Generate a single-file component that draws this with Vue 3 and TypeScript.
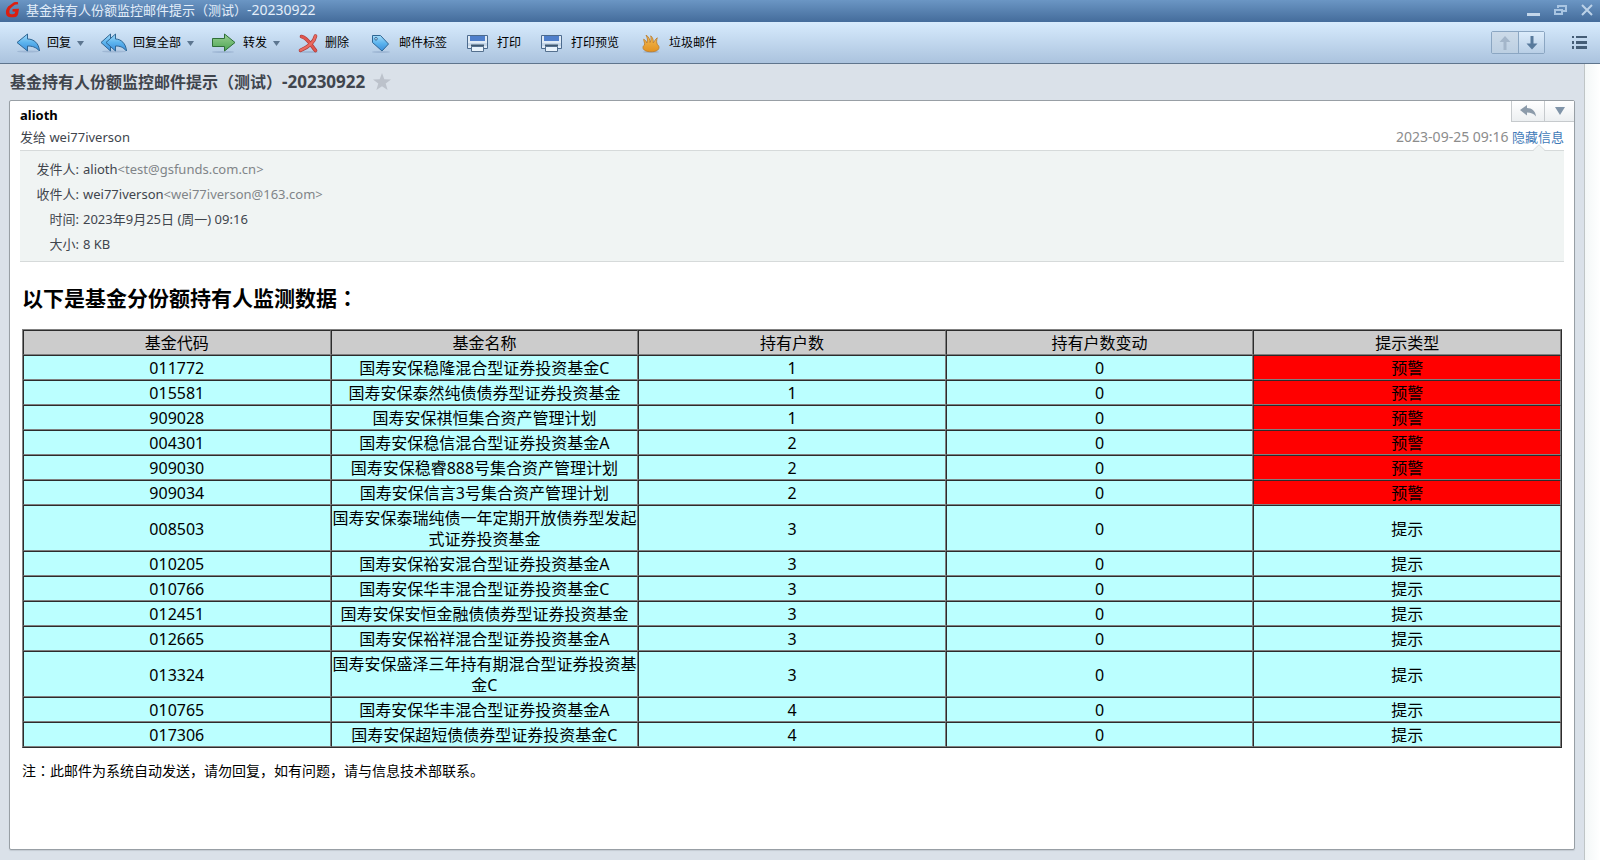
<script setup lang="ts">
interface Fund {
  code: string
  name: string
  holders: number
  change: number
}

interface Tool {
  id: string
  label: string
  width: number
  menu?: boolean
}

const tools: Tool[] = [
  { id: 'reply', label: '回复', width: 26, menu: true },
  { id: 'reply-all', label: '回复全部', width: 27, menu: true },
  { id: 'forward', label: '转发', width: 27, menu: true },
  { id: 'delete', label: '删除', width: 23 },
  { id: 'tag', label: '邮件标签', width: 28 },
  { id: 'print', label: '打印', width: 28 },
  { id: 'print', label: '打印预览', width: 28 },
  { id: 'junk', label: '垃圾邮件', width: 28 },
]

const columns = ['基金代码', '基金名称', '持有户数', '持有户数变动', '提示类型']

const funds: Fund[] = [
  { code: '011772', name: '国寿安保稳隆混合型证券投资基金C', holders: 1, change: 0 },
  { code: '015581', name: '国寿安保泰然纯债债券型证券投资基金', holders: 1, change: 0 },
  { code: '909028', name: '国寿安保祺恒集合资产管理计划', holders: 1, change: 0 },
  { code: '004301', name: '国寿安保稳信混合型证券投资基金A', holders: 2, change: 0 },
  { code: '909030', name: '国寿安保稳睿888号集合资产管理计划', holders: 2, change: 0 },
  { code: '909034', name: '国寿安保信言3号集合资产管理计划', holders: 2, change: 0 },
  { code: '008503', name: '国寿安保泰瑞纯债一年定期开放债券型发起式证券投资基金', holders: 3, change: 0 },
  { code: '010205', name: '国寿安保裕安混合型证券投资基金A', holders: 3, change: 0 },
  { code: '010766', name: '国寿安保华丰混合型证券投资基金C', holders: 3, change: 0 },
  { code: '012451', name: '国寿安保安恒金融债债券型证券投资基金', holders: 3, change: 0 },
  { code: '012665', name: '国寿安保裕祥混合型证券投资基金A', holders: 3, change: 0 },
  { code: '013324', name: '国寿安保盛泽三年持有期混合型证券投资基金C', holders: 3, change: 0 },
  { code: '010765', name: '国寿安保华丰混合型证券投资基金A', holders: 4, change: 0 },
  { code: '017306', name: '国寿安保超短债债券型证券投资基金C', holders: 4, change: 0 },
]

const isWarning = (fund: Fund): boolean => fund.holders < 3
</script>

<template>
  <div class="window" lang="zh-CN">
    <svg class="defs" width="0" height="0" aria-hidden="true">
      <defs>
        <linearGradient id="blue" x1="0" y1="0" x2="0" y2="1">
          <stop offset="0" stop-color="#a4dcfa" />
          <stop offset="0.5" stop-color="#5cb4ee" />
          <stop offset="1" stop-color="#3a8ddb" />
        </linearGradient>
        <linearGradient id="green" x1="0" y1="0" x2="0" y2="1">
          <stop offset="0" stop-color="#9ad094" />
          <stop offset="1" stop-color="#4ba552" />
        </linearGradient>
        <linearGradient id="orange" x1="0" y1="0" x2="0" y2="1">
          <stop offset="0" stop-color="#f3bd58" />
          <stop offset="1" stop-color="#e29220" />
        </linearGradient>
      </defs>
    </svg>

    <header class="titlebar">
      <svg class="logo" width="15" height="16" viewBox="0 0 15 16" aria-hidden="true">
        <path d="M4 5.500 9.500 1.500 13 1" fill="none" stroke="#dc1e10" stroke-width="2.600" />
        <path d="M4 4C1.500 6 .6 8.500 1 11.500c.4 2.500 2 3.800 4.500 3.800h3.500c2.500 0 3.800-1.500 4.200-3.800L14 6.800 7.500 7v2.600l2.800.2c-.3 1.700-1 2.500-2.600 2.500H6.500C4.700 12.300 4.200 11.300 4.400 9.500 4.600 7.300 5.500 5.800 7.500 4.500z" fill="#dc1e10" />
      </svg>
      <span class="caption">基金持有人份额监控邮件提示（测试）<span class="num">-20230922</span></span>
      <div class="window-buttons">
        <button type="button" aria-label="最小化">
          <svg width="14" height="12" viewBox="0 0 14 12"><path d="M1 9h13v3H1z" fill="#c3d6ea" /></svg>
        </button>
        <button type="button" aria-label="还原">
          <svg width="14" height="12" viewBox="0 0 14 12" fill="none" stroke="#a9c5e2" stroke-width="2"><path d="M5 4V2h8v5h-3M2 6h7v4H2z" /></svg>
        </button>
        <button type="button" aria-label="关闭">
          <svg width="14" height="12" viewBox="0 0 14 12" fill="none" stroke="#bcd2e8" stroke-width="2"><path d="M2 1l10 10M12 1 2 11" /></svg>
        </button>
      </div>
    </header>

    <nav class="toolbar">
      <button v-for="tool in tools" :key="tool.label" type="button" class="tool">
        <svg :width="tool.width" height="22" :viewBox="`0 0 ${tool.width} 22`" aria-hidden="true">
          <template v-if="tool.id === 'reply'">
            <ellipse cx="13" cy="19.500" rx="11" ry="1" fill="#8fa9c8" opacity=".6" />
            <path d="M2 10.500 12.500 2V7C19 7 24 11.500 24.500 19 21 15 17 14 12.500 14V19z" fill="url(#blue)" stroke="#2f6694" stroke-linejoin="round" />
          </template>
          <template v-else-if="tool.id === 'reply-all'">
            <ellipse cx="14" cy="19.500" rx="12" ry="1" fill="#8fa9c8" opacity=".6" />
            <path d="M1 10.500 10.500 2V19z" fill="url(#blue)" stroke="#2f6694" stroke-linejoin="round" />
            <path d="M6 10.500 15.500 2V7C21 7 26 11.500 26.500 19 23 15 20 14 15.500 14V19z" fill="url(#blue)" stroke="#2f6694" stroke-linejoin="round" />
          </template>
          <template v-else-if="tool.id === 'forward'">
            <ellipse cx="13" cy="20" rx="11" ry="1" fill="#8fa9c8" opacity=".6" />
            <path d="M2.500 6.500H14.500V2L25 10.500 14.500 19V14.500H2.500z" fill="url(#green)" stroke="#2f6f38" stroke-linejoin="round" />
          </template>
          <template v-else-if="tool.id === 'delete'">
            <ellipse cx="13" cy="20" rx="9" ry="1" fill="#8fa9c8" opacity=".6" />
            <g fill="none" stroke-linecap="round">
              <path d="M5.500 4.500C12 6 15 13.500 19.500 18.500M19.500 4C18 11 10 16 4.500 18.300" stroke="#a93a38" stroke-width="3.600" />
              <path d="M5.500 4.500C12 6 15 13.500 19.500 18.500" stroke="#e0564e" stroke-width="2.400" />
              <path d="M19.500 4C18 11 10 16 4.500 18.300" stroke="#ea6a5f" stroke-width="2.400" />
            </g>
          </template>
          <template v-else-if="tool.id === 'tag'">
            <ellipse cx="16" cy="20" rx="9" ry="1" fill="#8fa9c8" opacity=".6" />
            <path d="M7.500 3.500h8L23.500 12 17 19 7.500 10.500z" fill="url(#blue)" stroke="#2f6694" stroke-linejoin="round" />
            <circle cx="11" cy="6.800" r="1.300" fill="#e8f6ff" stroke="#2f6694" />
          </template>
          <template v-else-if="tool.id === 'print'">
            <path d="M4.500 3.500h20v13h-20z" fill="#e0ebf6" stroke="#4c6b8e" />
            <path d="M7 4h15v5H7z" fill="#4f7fcb" />
            <path d="M5 11h19v3H5z" fill="#c5d6e8" />
            <path d="M8 12.500h13v2H8z" fill="#3f5870" />
            <path d="M8.500 14.500h12v5h-12z" fill="#e8f2fb" stroke="#55708e" />
          </template>
          <template v-else>
            <ellipse cx="16" cy="20" rx="8" ry="1" fill="#8fa9c8" opacity=".6" />
            <path d="M9.500 13C10 10.500 8.500 9 8.700 7.200 10.500 8.200 11.500 9.500 11.800 11 13 8.500 12.500 5.500 11 3.200 13.800 4.500 15 7.500 15 10.500 16.300 8.500 16.200 6 15.700 3.800 17.800 5.500 18.500 8 18.200 10.800 19.500 9.500 20 7.500 22.300 5.800 21.300 8.500 21.500 10.500 22.300 12.500 23.500 13.300 24 14.300 24 15.500 24 18.300 20.500 19.800 16 19.800S8 18.300 8 15.500C8 14.500 8.500 13.600 9.500 13z" fill="url(#orange)" stroke="#b8792a" stroke-width=".8" stroke-linejoin="round" />
          </template>
        </svg>
        <span>{{ tool.label }}</span>
        <svg v-if="tool.menu" width="7" height="6" viewBox="0 0 7 6" aria-hidden="true"><path d="M0 1h7L3.500 6z" fill="#5d7690" /></svg>
      </button>

      <div class="pager">
        <button type="button" disabled aria-label="上一封">
          <svg width="12" height="14" viewBox="0 0 12 14"><path d="M6 0 11.500 6H7.500v8h-3V6H.5z" fill="#a4b6ca" /></svg>
        </button>
        <button type="button" aria-label="下一封">
          <svg width="12" height="14" viewBox="0 0 12 14"><path d="M6 13.500.5 7.500h4V0h3v7.500h4z" fill="#587a9c" /></svg>
        </button>
      </div>
      <button type="button" class="list-button" aria-label="列表">
        <svg width="16" height="13" viewBox="0 0 16 13"><path d="M0 0h2v2H0zM4 0h11v2H4zM0 5h2v3H0zM4 5h11v3H4zM0 10h2v3H0zM4 10h11v3H4z" fill="#455d76" /></svg>
      </button>
    </nav>

    <div class="workspace">
      <main class="reader">
        <div class="subject">
          <h1>基金持有人份额监控邮件提示（测试）<span class="num">-20230922</span></h1>
          <button type="button" class="star" aria-label="星标">
            <svg width="18" height="18" viewBox="0 0 18 18"><path d="M9 0l2.300 6.300 6.700.2-5.300 4.100L14.600 17 9 13.200 3.400 17l1.900-6.400L0 6.500l6.700-.2z" fill="#bcc2cb" /></svg>
          </button>
        </div>

        <article class="card">
          <div class="quick">
            <button type="button" aria-label="回复此邮件">
              <svg width="16" height="12" viewBox="0 0 16 12"><path d="M0 5 7 0v3c5 0 8.500 3 9 8.500C13.500 8.500 11 7.500 7 7.500V10.500z" fill="#8c9baa" /></svg>
            </button>
            <button type="button" aria-label="更多操作">
              <svg width="10" height="8" viewBox="0 0 10 8"><path d="M0 0h10L5 8z" fill="#8094a8" /></svg>
            </button>
          </div>

          <div class="summary">
            <strong class="from">alioth</strong>
            <div class="line">
              <span>发给 wei77iverson</span>
              <span class="when"><time datetime="2023-09-25T09:16">2023-09-25 09:16</time> <a href="#details">隐藏信息</a></span>
            </div>
          </div>

          <dl id="details" class="details">
            <svg class="notch" width="12" height="7" viewBox="0 0 12 7" aria-hidden="true">
              <path d="M0 7 6 1l6 6z" fill="#f0f4f3" />
              <path d="M0 6.500 6 .7l6 5.800" fill="none" stroke="#d6dada" />
            </svg>
            <dt>发件人:</dt>
            <dd>alioth<span class="mail">&lt;test@gsfunds.com.cn&gt;</span></dd>
            <dt>收件人:</dt>
            <dd>wei77iverson<span class="mail">&lt;wei77iverson@163.com&gt;</span></dd>
            <dt>时间:</dt>
            <dd>2023年9月25日 (周一) 09:16</dd>
            <dt>大小:</dt>
            <dd>8 KB</dd>
          </dl>

          <section class="content">
            <h2>以下是基金分份额持有人监测数据<span class="colon" lang="zh-TW">：</span></h2>
            <table>
              <thead>
                <tr>
                  <th v-for="column in columns" :key="column" scope="col">{{ column }}</th>
                </tr>
              </thead>
              <tbody>
                <tr v-for="fund in funds" :key="fund.code">
                  <td>{{ fund.code }}</td>
                  <td>{{ fund.name }}</td>
                  <td>{{ fund.holders }}</td>
                  <td>{{ fund.change }}</td>
                  <td :class="{ warning: isWarning(fund) }">{{ isWarning(fund) ? '预警' : '提示' }}</td>
                </tr>
              </tbody>
            </table>
            <p>注<span class="colon" lang="zh-TW">：</span>此邮件为系统自动发送，请勿回复，如有问题，请与信息技术部联系。</p>
          </section>
        </article>
      </main>
      <aside class="edge"></aside>
    </div>
  </div>
</template>

<style>
body {
  margin: 0;
}
</style>

<style scoped>
.window {
  display: flex;
  flex-direction: column;
  min-height: 100vh;
  background: #dae1e9;
  color: #000;
  font-family: "Noto Sans", "Noto Sans CJK SC", sans-serif;
  font-size: 13px;
}

.defs {
  position: absolute;
}

button {
  display: flex;
  align-items: center;
  justify-content: center;
  margin: 0;
  padding: 0;
  border: 0;
  background: none;
  color: inherit;
  font: inherit;
}

.titlebar {
  display: flex;
  align-items: center;
  box-sizing: border-box;
  height: 22px;
  padding: 0 6px 2px 5px;
  background: linear-gradient(#6b96c4, #446c9b);
  color: #e3eefa;
}

.caption {
  flex: 1;
  margin-left: 6px;
  line-height: 20px;
}

.caption .num {
  font-size: 14px;
  line-height: 1;
}

.window-buttons {
  display: flex;
  gap: 13px;
}

.toolbar {
  display: flex;
  align-items: center;
  gap: 16px;
  box-sizing: border-box;
  height: 42px;
  padding: 0 12px 0 15px;
  border-bottom: 1px solid #5f758d;
  background: linear-gradient(#d7ebfd, #abc3de);
}

.tool {
  gap: 6px;
  font-size: 12px;
  line-height: 20px;
  white-space: nowrap;
}

.pager {
  display: flex;
  margin-left: auto;
  border: 1px solid #8ba6c2;
  border-radius: 2px;
}

.pager button {
  width: 26px;
  height: 21px;
  background: linear-gradient(#dcecfb, #b9cfe6);
}

.pager button:disabled {
  background: linear-gradient(#cddbe9, #bccfe2);
}

.pager button + button {
  border-left: 1px solid #8ba6c2;
}

.list-button {
  margin-left: 11px;
}

.workspace {
  display: flex;
  flex: 1;
}

.reader {
  display: flex;
  flex: 1;
  flex-direction: column;
  min-width: 0;
  padding: 0 9px 10px;
}

.edge {
  width: 15px;
  border-left: 1px solid #bfc5c6;
  background: linear-gradient(90deg, #f3f7f7, #fff);
}

.subject {
  display: flex;
  align-items: center;
  gap: 8px;
  height: 36px;
  padding-left: 1px;
}

h1 {
  margin: 0;
  color: #40454d;
  font-size: 16px;
  line-height: 24px;
}

h1 .num {
  font-size: 17px;
  line-height: 1;
}

.card {
  position: relative;
  display: flex;
  flex: 1;
  flex-direction: column;
  padding: 3px 10px 0;
  border: 1px solid #989fa5;
  border-radius: 2px;
  background: #fff;
  box-shadow: 0 1px 1px #c3cad2;
}

.quick {
  position: absolute;
  top: 0;
  right: 0;
  display: flex;
  border: solid #c6cacd;
  border-width: 0 0 1px 1px;
  background: linear-gradient(#fff, #eceff1);
}

.quick button {
  width: 32px;
  height: 20px;
}

.quick button + button {
  width: 30px;
  border-left: 1px solid #c6cacd;
}

.summary {
  color: #40454d;
  line-height: 22px;
}

.from {
  display: block;
  color: #000;
}

.line {
  display: flex;
  justify-content: space-between;
}

.when {
  color: #8c8c8c;
}

.when time {
  font-size: 14px;
  line-height: 1;
}

.when a {
  color: #3f7ab8;
  text-decoration: none;
}

.details {
  position: relative;
  display: grid;
  grid-template-columns: 43px 1fr;
  column-gap: 4px;
  margin: 2px 0 0;
  padding: 6px 16px 4px;
  border: solid #d6dada;
  border-width: 1px 0;
  background: #f0f4f3;
  color: #40454d;
  line-height: 25px;
}

.details dt {
  text-align: right;
  white-space: nowrap;
}

.details dd {
  margin: 0;
}

.notch {
  position: absolute;
  top: -7px;
  right: 19px;
}

.mail {
  color: #808488;
}

.content {
  padding: 22px 2px 0;
}

h2 {
  margin: 0 0 17px;
  font-size: 21px;
  line-height: 28px;
}

.colon {
  font-family: "Noto Sans CJK TC", sans-serif;
  line-height: 1;
}

table {
  width: 100%;
  border: 1px solid;
  border-color: #808080 #2c2c2c #2c2c2c #808080;
  border-spacing: 0;
  table-layout: fixed;
  font-size: 16px;
  line-height: 21px;
  text-align: center;
}

th,
td {
  padding: 2px 0 0;
  border: 1px solid;
  border-color: #2c2c2c #808080 #808080 #2c2c2c;
  background: #bbffff;
}

th {
  background: #cccccc;
  font-weight: 400;
}

td.warning {
  background: #ff0000;
}

p {
  margin: 13px 0 0;
  font-size: 14px;
  line-height: 20px;
}
</style>
